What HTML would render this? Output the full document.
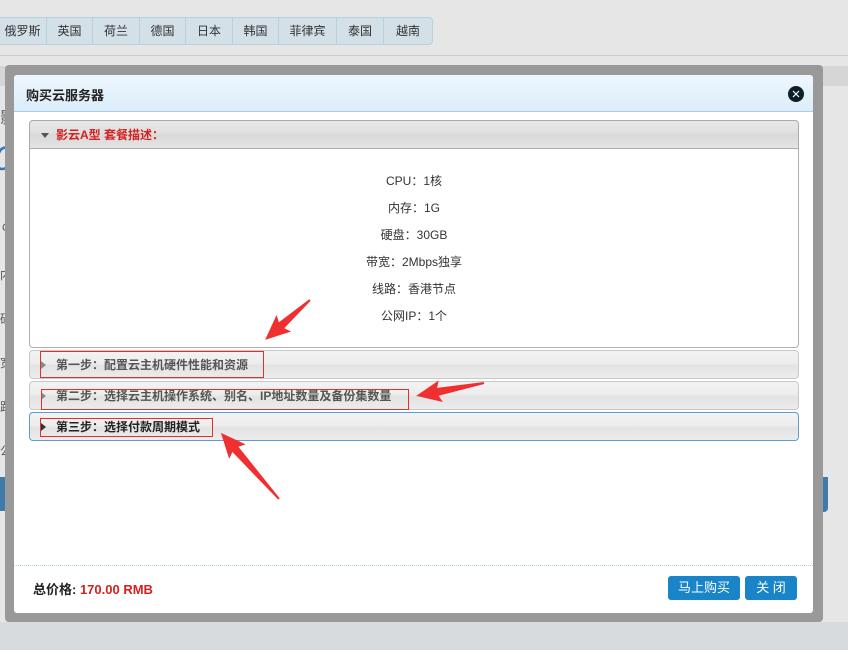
<!DOCTYPE html>
<html><head><meta charset="utf-8"><style>
*{margin:0;padding:0;box-sizing:border-box}
body{width:848px;height:650px;overflow:hidden;position:relative;background:#d8dbde;font-family:"Liberation Sans","Noto Sans CJK SC",sans-serif;font-size:12px;color:#333}
.abs{position:absolute}
#top{left:0;top:0;width:848px;height:622px;background:#e6e6e6}
#tabs{left:-2px;top:17px;height:28px;display:flex;border:1px solid #b8cfdc;border-radius:0 4px 4px 0;background:#d3e0e8}
#tabs span{text-align:center;line-height:26px;font-size:12px;color:#333;border-right:1px solid #b8cfdc}
#tabs span:last-child{border-right:none}
#frame{left:5px;top:65px;width:818px;height:557px;background:#999;border-radius:4px}
#dlg{left:14px;top:75px;width:799px;height:538px;background:#fff;border-radius:3px;overflow:hidden}
#hd{left:0;top:0;width:799px;height:37px;background:linear-gradient(#eef7fe,#dcedf9);border-bottom:1px solid #a8d0e8}
#hd b{position:absolute;left:12px;top:10px;font-size:13px;color:#222}
#x{right:9px;top:11px;width:16px;height:16px;border-radius:50%;background:#0d1f2a}
.acc{position:absolute;left:15px;width:770px;height:29px;border:1px solid #c8c8c8;border-radius:4px;background:linear-gradient(#f3f3f3 0,#ececec 50%,#e2e2e2 51%,#ececec 100%)}
.acc .t{position:absolute;left:26px;top:5px;font-size:12px;font-weight:bold;color:#555}
.tri{position:absolute;left:11px;top:10px;width:0;height:0;border-top:4px solid transparent;border-bottom:4px solid transparent;border-left:5px solid #888}
.box{position:absolute;border:1px solid #e03030}
#spec{position:absolute;left:15px;top:73px;width:770px;height:200px;border:1px solid #b0b0b0;border-top:none;border-radius:0 0 4px 4px}
#spec p{text-align:center;font-size:12px;color:#333;height:27px;line-height:27px}
#ft{left:0;top:490px;width:799px;border-top:1px dotted #a8cfe4}
.btn{position:absolute;top:501px;height:24px;background:#1a84c8;color:#fff;font-size:13px;text-align:center;line-height:24px;border-radius:3px}
</style></head><body>
<div id="top" class="abs"></div>
<div id="tabs" class="abs"><span style="width:48px">俄罗斯</span><span style="width:46px">英国</span><span style="width:47px">荷兰</span><span style="width:46px">德国</span><span style="width:47px">日本</span><span style="width:46px">韩国</span><span style="width:58px">菲律宾</span><span style="width:47px">泰国</span><span style="width:48px">越南</span></div>
<div class="abs" style="left:0;top:55px;width:848px;height:1px;background:#ccc"></div>
<div class="abs" style="left:0;top:66px;width:848px;height:20px;background:#d6d6d6"></div>
<div class="abs" style="left:0;top:104px;font-size:16px;color:#666">影</div>
<div class="abs" style="left:-6px;top:140px;font-size:34px;color:#3a78b0;font-style:italic">0</div>
<div class="abs" style="left:2px;top:222px;font-size:11px;color:#555">CP</div>
<div class="abs" style="left:0;top:266px;color:#555">内</div>
<div class="abs" style="left:0;top:310px;color:#555">硬</div>
<div class="abs" style="left:0;top:354px;color:#555">宽</div>
<div class="abs" style="left:0;top:398px;color:#555">路</div>
<div class="abs" style="left:0;top:442px;color:#555">公</div>
<div class="abs" style="left:0;top:477px;width:12px;height:34px;background:#3f7aa8"></div>
<div class="abs" style="left:815px;top:477px;width:13px;height:35px;background:#3f7aa8;border-radius:0 0 4px 0"></div>
<div id="frame" class="abs"></div>
<div id="dlg" class="abs">
 <div id="hd" class="abs"><b>购买云服务器</b><div id="x" class="abs"><svg width="16" height="16"><path d="M5 5L11 11M11 5L5 11" stroke="#fff" stroke-width="1.2"/></svg></div></div>
 <div class="acc" style="top:45px;border-radius:4px 4px 0 0;background:linear-gradient(#e8e8e8 0,#e0e0e0 45%,#d8d8d8 50%,#e4e4e4 100%);border-color:#aaa"><div style="position:absolute;left:11px;top:12px;border-left:4px solid transparent;border-right:4px solid transparent;border-top:5px solid #555"></div><span class="t" style="color:#d42020">影云A型 套餐描述：</span></div>
 <div id="spec"><div style="height:20px"></div><p>CPU：1核</p><p>内存：1G</p><p>硬盘：30GB</p><p>带宽：2Mbps独享</p><p>线路：香港节点</p><p>公网IP：1个</p></div>
 <div class="acc" style="top:275px"><div class="tri"></div><span class="t">第一步：配置云主机硬件性能和资源</span></div>
 <div class="acc" style="top:306px"><div class="tri"></div><span class="t">第二步：选择云主机操作系统、别名、IP地址数量及备份集数量</span></div>
 <div class="acc" style="top:337px;border-color:#5b9fd0"><div class="tri" style="border-left-color:#333"></div><span class="t" style="color:#222">第三步：选择付款周期模式</span></div>
 <div class="box" style="left:26px;top:276px;width:224px;height:27px"></div>
 <div class="box" style="left:27px;top:314px;width:368px;height:21px"></div>
 <div class="box" style="left:26px;top:343px;width:173px;height:19px"></div>
 <div id="ft" class="abs"></div>
 <div class="abs" style="left:19px;top:504px;font-size:13px;font-weight:bold;color:#222">总价格: <span style="color:#d42020">170.00 RMB</span></div>
 <div class="btn" style="left:654px;width:72px">马上购买</div>
 <div class="btn" style="left:731px;width:52px">关 闭</div>
</div>
<svg class="abs" style="left:0;top:0" width="848" height="650">
<g fill="#f03030">
<polygon transform="translate(310,300) rotate(138.4)" points="0,-1 38,-4 35,-11 60,0 35,11 38,4 0,1"/>
<polygon transform="translate(484,383) rotate(169.2)" points="0,-1 47,-4 44,-11 69,0 44,11 47,4 0,1"/>
<polygon transform="translate(279,499) rotate(228.7)" points="0,-1 66,-4 63,-11 88,0 63,11 66,4 0,1"/>
</g></svg>
</body></html>
